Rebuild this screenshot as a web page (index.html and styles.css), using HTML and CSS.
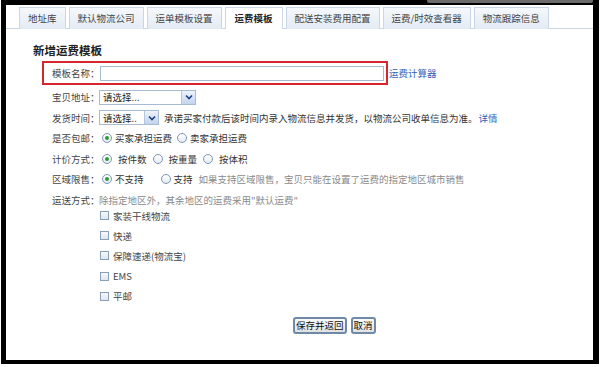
FILE: index.html
```html
<!DOCTYPE html>
<html>
<head>
    <title>新增运费模板</title>
    <meta charset="utf-8">
    <link rel="stylesheet" href="styles.css">
</head>
<body>

    <div class="frame">
        <div class="top-strip"></div>

        <!-- Tab bar -->
        <ul class="tabs">
            <li>地址库</li>
            <li>默认物流公司</li>
            <li>运单模板设置</li>
            <li class="active">运费模板</li>
            <li>配送安装费用配置</li>
            <li>运费/时效查看器</li>
            <li>物流跟踪信息</li>
        </ul>

        <div class="panel">
            <h1>新增运费模板</h1>

            <div class="name-row">
                <div class="name-box">
                    <span class="label">模板名称：</span>
                    <span class="input"></span>
                </div>
                <a class="link">运费计算器</a>
            </div>

            <div class="row">
                <span class="label">宝贝地址：</span>
                <span class="select wide">请选择...<span class="arrow"><svg width="8" height="6" viewBox="0 0 8 6"><path d="M1 1.5 L4 4.5 L7 1.5" fill="none" stroke="#1d3f86" stroke-width="1.6"/></svg></span></span>
            </div>

            <div class="row">
                <span class="label">发货时间：</span>
                <span class="select narrow">请选择..<span class="arrow"><svg width="8" height="6" viewBox="0 0 8 6"><path d="M1 1.5 L4 4.5 L7 1.5" fill="none" stroke="#1d3f86" stroke-width="1.6"/></svg></span></span>
                <span class="text">承诺买家付款后该时间内录入物流信息并发货，以物流公司收单信息为准。</span>
                <a class="link">详情</a>
            </div>

            <div class="row">
                <span class="label">是否包邮：</span>
                <span class="radio checked"></span><span class="opt">买家承担运费</span>
                <span class="radio"></span><span class="opt">卖家承担运费</span>
            </div>

            <div class="row">
                <span class="label">计价方式：</span>
                <span class="radio checked"></span><span class="opt wide-gap">按件数</span>
                <span class="radio"></span><span class="opt wide-gap">按重量</span>
                <span class="radio"></span><span class="opt wide-gap">按体积</span>
            </div>

            <div class="row">
                <span class="label">区域限售：</span>
                <span class="radio checked"></span><span class="opt spaced">不支持</span>
                <span class="radio"></span><span class="opt">支持</span>
                <span class="hint">如果支持区域限售，宝贝只能在设置了运费的指定地区城市销售</span>
            </div>

            <div class="row">
                <span class="label">运送方式：</span>
                <span class="hint tight">除指定地区外，其余地区的运费采用"默认运费"</span>
            </div>

            <div class="checks">
                <div class="check"><span class="box"></span>家装干线物流</div>
                <div class="check"><span class="box"></span>快递</div>
                <div class="check"><span class="box"></span>保障速递(物流宝)</div>
                <div class="check"><span class="box"></span>EMS</div>
                <div class="check"><span class="box"></span>平邮</div>
            </div>

            <div class="actions">
                <button>保存并返回</button>
                <button>取消</button>
            </div>
        </div>
    </div>

</body>
</html>
```

FILE: styles.css
```css
/* Page */
body, h1, ul {
    margin: 0;
    padding: 0;
}

body {
    background: #fff;
    font-family: "Noto Sans CJK SC", "Liberation Sans", sans-serif;
    font-size: 9.5px;
    color: #333;
}

.frame {
    position: relative;
    box-sizing: border-box;
    width: 598px;
    height: 364px;
    margin-left: 1px;
    border-style: solid;
    border-color: #000;
    border-width: 5px 6px 4px 5px;
    background: #fff;
}

/* grey bar peeking over the top edge */
.top-strip {
    position: absolute;
    top: -5px;
    left: 421px;
    width: 166px;
    height: 3px;
    background: #6b6b6b;
    border-radius: 0 0 2px 2px;
}

/* Tabs */
.tabs {
    list-style: none;
    display: flex;
    gap: 3px;
    padding: 2px 0 0 13px;
    border-bottom: 1px solid #c9d6e5;
    height: 21px;
}

.tabs li {
    box-sizing: border-box;
    height: 22px;
    line-height: 20px;
    padding: 0 8px;
    border: 1px solid #c9d6e5;
    border-bottom: none;
    background: linear-gradient(#f5f8fc, #e4ebf4);
    color: #444;
    white-space: nowrap;
}

.tabs li.active {
    background: #fff;
    font-weight: bold;
    color: #222;
    padding: 0 9px;
}

/* Form panel */
.panel {
    padding-left: 27px;
}

.panel h1 {
    font-size: 11.5px;
    font-weight: bold;
    line-height: 14px;
    margin-top: 14px;
    color: #222;
}

.name-row {
    display: flex;
    align-items: center;
    margin-top: 4px;
}

.name-box {
    box-sizing: border-box;
    display: flex;
    align-items: center;
    width: 346px;
    height: 24px;
    margin-left: 9px;
    padding-left: 8px;
    border: 2px solid #d8262d;
}

.label {
    width: 47px;
    flex: none;
    color: #444;
    white-space: nowrap;
}

.input {
    box-sizing: border-box;
    width: 284px;
    height: 15px;
    margin-left: 1px;
    border: 1px solid #a9bbd0;
    background: #fff;
}

.link {
    color: #2f5fb8;
    margin-left: 1px;
}

.row {
    display: flex;
    align-items: center;
    height: 20.5px;
    padding-left: 19px;
    white-space: nowrap;
}

.name-row + .row {
    margin-top: 2px;
}

/* fake select boxes */
.select {
    box-sizing: border-box;
    display: flex;
    align-items: center;
    justify-content: space-between;
    height: 15px;
    padding-left: 3px;
    border: 1px solid #a9bbd0;
    color: #222;
}

.select.wide {
    width: 97px;
}

.select.narrow {
    width: 60px;
}

.select .arrow {
    display: flex;
    align-items: center;
    justify-content: center;
    width: 13px;
    height: 13px;
    background: linear-gradient(#eef3fb, #c3d4ee);
    border-left: 1px solid #b4c6de;
}

.text {
    margin-left: 5px;
}

/* radios */
.radio {
    box-sizing: border-box;
    display: inline-flex;
    align-items: center;
    justify-content: center;
    width: 10px;
    height: 10px;
    margin-left: 3px;
    border: 1px solid #7e96b2;
    border-radius: 50%;
    background: linear-gradient(#fff, #e4ebf3);
}

.radio.checked::after {
    content: "";
    width: 4px;
    height: 4px;
    border-radius: 50%;
    background: #2f9a3c;
}

.opt {
    margin: 0 2px 0 3px;
}

.opt.wide-gap {
    margin: 0 3px 0 6px;
}

.opt.spaced {
    margin-right: 14px;
}

.hint {
    color: #8a8a8a;
    margin-left: 4px;
}

.hint.tight {
    margin-left: 0;
}

/* checkbox list */
.checks {
    margin-top: -4.5px;
    padding-left: 67px;
}

.check {
    display: flex;
    align-items: center;
    height: 20.2px;
    color: #444;
}

.check .box {
    box-sizing: border-box;
    width: 9px;
    height: 9px;
    margin-right: 4px;
    border: 1px solid #8aa0b9;
    background: linear-gradient(#f7f9fc, #dfe6ee);
}

/* buttons */
.actions {
    display: flex;
    gap: 4px;
    margin-top: 11px;
    padding-left: 260px;
}

.actions button {
    font: inherit;
    font-size: 9.5px;
    height: 17px;
    padding: 0 1px;
    line-height: 13px;
    color: #111;
    background: linear-gradient(#fafafa, #e2e2e2);
    border: 2px solid #6f8aa6;
    border-radius: 3px;
}
```
